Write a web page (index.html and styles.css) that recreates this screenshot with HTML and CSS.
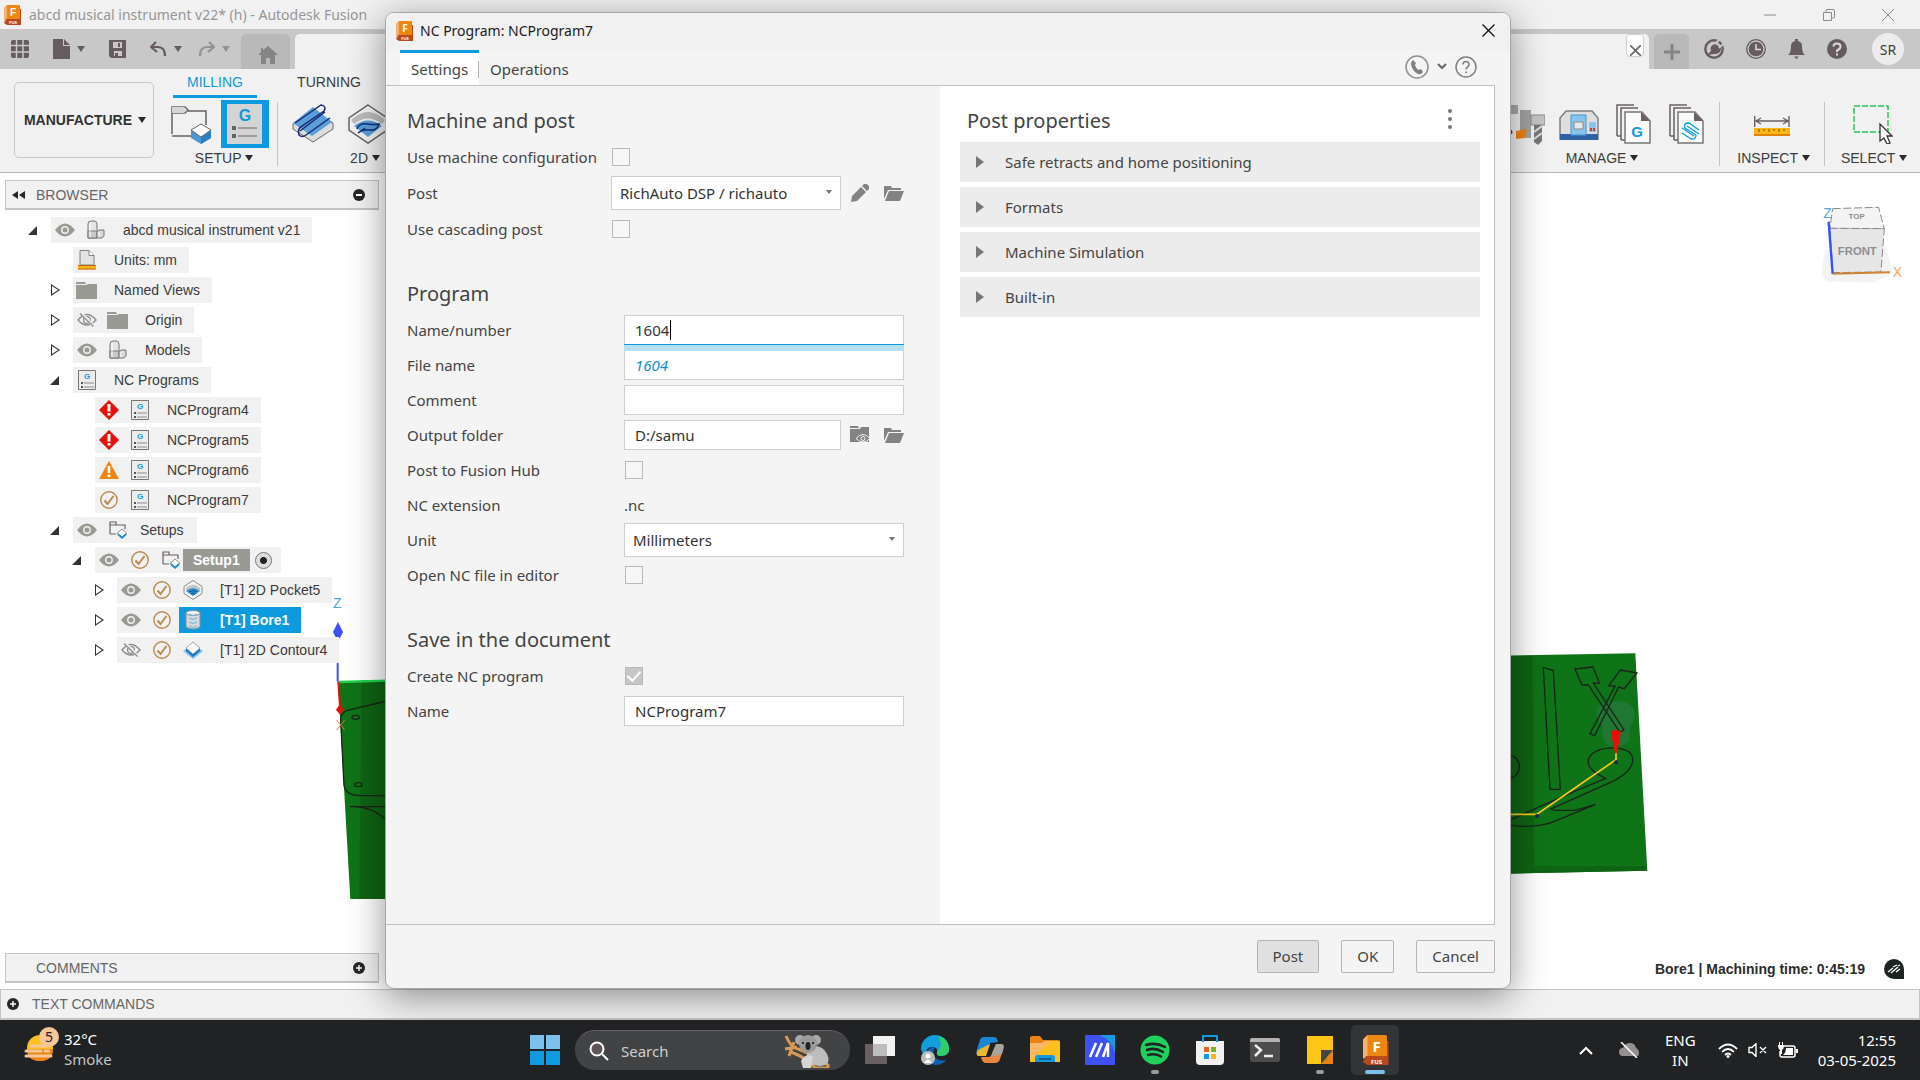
FILE: index.html
```html
<!DOCTYPE html>
<html lang="en">
<head>
    <meta charset="UTF-8">
    <meta name="viewport" content="width=device-width, initial-scale=1.0">
    <title>abcd musical instrument v22* (h) - Autodesk Fusion</title>
    <link rel="stylesheet" href="styles.css">
</head>
<body>

    <!-- shared icons -->
    <svg class="defs" width="0" height="0">
        <symbol id="fusion" viewBox="0 0 18 20">
            <path d="M4 0h12a1 1 0 0 1 1 1v13H1V3z" fill="#ec8712"/>
            <path d="M1 3l3-3v14l-3 2z" fill="#f4b271"/>
            <path d="M3 14h15v6H4l-3-2 2-4z" fill="#b9481f"/>
            <path d="M17 4h1v10h-1z" fill="#b9481f"/>
            <text x="10" y="11" font-size="10" font-weight="bold" fill="#fff" text-anchor="middle">F</text>
            <text x="10" y="19" font-size="4" font-weight="bold" fill="#fff" text-anchor="middle">FUS</text>
        </symbol>
        <symbol id="eye" viewBox="0 0 20 14">
            <path d="M0 7Q10-6 20 7Q10 20 0 7z" fill="#9a9a94"/>
            <circle cx="10" cy="7" r="3.2" fill="none" stroke="#f1f1f1" stroke-width="1.4"/>
        </symbol>
        <symbol id="eye-off" viewBox="0 0 20 14">
            <path d="M1 7Q10-4 19 7Q10 17 1 7z" fill="none" stroke="#8c8c88" stroke-width="1.3"/>
            <circle cx="10" cy="7" r="3.4" fill="none" stroke="#8c8c88" stroke-width="1.3"/>
            <path d="M4 0l13 13.5" stroke="#f1f1f1" stroke-width="3"/>
            <path d="M3 .5l13.5 13" stroke="#8c8c88" stroke-width="1.3"/>
        </symbol>
        <symbol id="part" viewBox="0 0 18 20">
            <path d="M1 4q0-3 3-3h3q3 0 3 3v14H1z" fill="#e4e4e4" stroke="#77777a"/>
            <path d="M1 11h9v7H1z" fill="#c9c9c9" stroke="#77777a"/>
            <path d="M10 12l2-2h5v6l-2 2h-5z" fill="#d7d7d7" stroke="#77777a"/>
            <path d="M3 3v14M12 12v5" stroke="#fff"/>
        </symbol>
        <symbol id="folder" viewBox="0 0 21 17">
            <path d="M0 0h9l1 2H0zM0 3h10l2-1h9v15H0z" fill="#9a9a94"/>
        </symbol>
        <symbol id="nc" viewBox="0 0 18 20">
            <path d="M.5.5h17v19H.5z" fill="#ececec" stroke="#77777a"/>
            <text x="9" y="9" font-size="8" font-weight="bold" fill="#0e9ade" text-anchor="middle">G</text>
            <path d="M6 13h10M6 17h10" stroke="#8a8a8a"/>
            <path d="M3 12h2v2H3zM3 16h2v2H3z" fill="#555"/>
        </symbol>
        <symbol id="units" viewBox="0 0 18 20">
            <path d="M2 .5h9l5 5V15H2z" fill="#e3e3e3" stroke="#808080"/>
            <path d="M11 .5v5h5" fill="#fff" stroke="#808080"/>
            <path d="M0 15h18v4.500H0z" fill="#fdb713"/>
            <path d="M0 15.500h18M0 19h18" stroke="#c8601a"/>
        </symbol>
        <symbol id="error" viewBox="0 0 20 20">
            <path d="M10 0l10 10-10 10L0 10z" fill="#e60f0a"/>
            <path d="M8.500 4h3v7.500h-3zM8.500 13h3v2.500h-3z" fill="#fff"/>
        </symbol>
        <symbol id="warn" viewBox="0 0 20 18">
            <path d="M10 0l10 18H0z" fill="#f0860f"/>
            <path d="M8.700 5h2.600v7H8.700zM8.700 13.500h2.600V16H8.700z" fill="#fff"/>
        </symbol>
        <symbol id="ok" viewBox="0 0 18 18">
            <circle cx="9" cy="9" r="8.200" fill="none" stroke="#b98a52" stroke-width="1.400"/>
            <path d="M4.500 9.500l3 3.500 6-8" fill="none" stroke="#b98a52" stroke-width="2"/>
        </symbol>
        <symbol id="setup" viewBox="0 0 18 18">
            <path d="M1 13V1h6v3h9v4M1 4h6M1 13h6" fill="none" stroke="#6a6063" stroke-width="1.200"/>
            <path d="M13 8l4.500 4-4.500 4-4.500-4z" fill="#fff" stroke="#6a6063" stroke-width=".7"/>
            <path d="M8.500 12l4.500 3.500 4.500-3.500v2L13 18l-4.500-4z" fill="#1b8fd6"/>
        </symbol>
        <symbol id="pocket" viewBox="0 0 40 40">
            <path d="M20 1l19 13v12L20 39 1 26V14z" fill="#f3f3f3" stroke="#666" stroke-width="1.500"/>
            <path d="M3 16q17-16 34 0l-3 4q-14-11-28 0z" fill="#bcbcbc"/>
            <path d="M6 22q14-11 28 0L20 33z" fill="#5a9fd8"/>
            <path d="M9 25q2-6 10-5t12 0q-2 7-9 6t-12 3l7-5" fill="none" stroke="#12337a" stroke-width="1.500"/>
        </symbol>
        <symbol id="pocket-small" viewBox="0 0 20 20">
            <path d="M10 .5l9 6v7l-9 6-9-6v-7z" fill="#f3f3f3" stroke="#8a8a8a"/>
            <path d="M3 8q7-7 14 0v3q-7-6-14 0z" fill="#c4c4c4"/>
            <path d="M3 11q7-6 14 0l-7 5z" fill="#2f8dd0"/>
            <path d="M6 12q4-3 8 0M8 14q2-2 4 0" fill="none" stroke="#12507f"/>
        </symbol>
        <symbol id="bore" viewBox="0 0 16 20">
            <path d="M1 3v14q7 4 14 0V3z" fill="#d5d9dc" stroke="#8a8f93"/>
            <ellipse cx="8" cy="3" rx="7" ry="2.500" fill="#eef3f6" stroke="#8a8f93"/>
            <path d="M4 4q4 3 8 0M4 8q4 3 8 0M4 12q4 3 8 0M4 16q4 3 8 0" fill="none" stroke="#6fb5e2"/>
        </symbol>
        <symbol id="contour" viewBox="0 0 20 18">
            <path d="M0 10l10 8 10-8-3-2H3z" fill="#7cc0ee"/>
            <path d="M3 7l7 6 7-6v3l-7 6-7-6z" fill="#1976bd"/>
            <path d="M10 1l7 6-7 6-7-6z" fill="#fafafa" stroke="#999" stroke-width=".8"/>
        </symbol>
        <symbol id="plus-dot" viewBox="0 0 12 12">
            <circle cx="6" cy="6" r="6" fill="#262626"/>
            <path d="M3 6h6M6 3v6" stroke="#fff" stroke-width="1.400"/>
        </symbol>
        <symbol id="open-folder" viewBox="0 0 20 16">
            <path d="M0 1h7l1 2h9v2H4L0 14z" fill="#838383"/>
            <path d="M5 6h15l-4 10H1z" fill="#838383"/>
        </symbol>
        <symbol id="pages" viewBox="0 0 36 40">
            <path d="M1 32V1h17M5 36V4h17M1 32h4M5 36h4" fill="none" stroke="#6a6063" stroke-width="1.500"/>
            <path d="M9 8h17l8 9v22H9z" fill="#fafafa" stroke="#777" stroke-width="1.500"/>
            <path d="M18 1l16 16h-9V8z" fill="#6a6063"/>
        </symbol>
    </svg>

    <header class="title-bar">
        <svg class="app-icon"><use href="#fusion"/></svg>
        <span class="app-title">abcd musical instrument v22* (h) - Autodesk Fusion</span>
        <div class="window-buttons">
            <button aria-label="Minimize"><svg width="12" height="12" viewBox="0 0 12 12"><path d="M0 6h12"/></svg></button>
            <button aria-label="Restore"><svg width="12" height="12" viewBox="0 0 12 12"><path d="M.5 3.500h8v8h-8zM3 3V1.500q0-1 1-1h6q1.500 0 1.500 1.500v6q0 1-1 1H9"/></svg></button>
            <button aria-label="Close"><svg width="12" height="12" viewBox="0 0 12 12"><path d="M0 0l12 12M12 0L0 12"/></svg></button>
        </div>
    </header>

    <nav class="tab-bar">
        <div class="quick">
            <button aria-label="Data panel"><svg width="18" height="18" viewBox="0 0 18 18"><rect width="18" height="18" rx="2" fill="#665c60"/><path d="M5.500 0v18M12 0v18M0 5.500h18M0 12h18" stroke="#c8c8c8" stroke-width="1.500"/></svg></button>
            <button class="drop" aria-label="File"><svg width="17" height="20" viewBox="0 0 17 20"><path d="M0 0h10v7h7v13H0zM11 0l6 6h-6z" fill="#665c60"/></svg></button>
            <button aria-label="Save"><svg width="17" height="18" viewBox="0 0 17 18"><path d="M0 0h17v18H2l-2-2z" fill="#665c60"/><path d="M4 2h9v6H4zM5 11h8v5H5z" fill="#c8c8c8"/><path d="M9 3h2v4H9zM6 13h3v4H6z" fill="#665c60"/></svg></button>
            <button class="drop" aria-label="Undo"><svg width="17" height="16" viewBox="0 0 17 16"><path d="M6 1L1 6l6 5M1 6h7q7 0 7 9" fill="none" stroke="#665c60" stroke-width="2.200"/></svg></button>
            <button class="drop faded" aria-label="Redo"><svg width="17" height="16" viewBox="0 0 17 16"><path d="M11 1l5 5-6 5M16 6H9q-7 0-7 9" fill="none" stroke="#665c60" stroke-width="2.200"/></svg></button>
        </div>
        <button class="home-tab" aria-label="Home"><svg width="20" height="18" viewBox="0 0 20 18"><path d="M10 0l10 9h-3v9h-5v-6H8v6H3V9H0L3 6V2h2v2z" fill="#858585"/></svg></button>
        <div class="doc-tab">
            <button aria-label="Close tab"><svg width="11" height="11" viewBox="0 0 11 11"><path d="M0 0l11 11M11 0L0 11" stroke="#666" stroke-width="1.600"/></svg></button>
        </div>
        <button class="new-tab" aria-label="New tab"><svg width="16" height="16" viewBox="0 0 16 16"><path d="M8 0v16M0 8h16" stroke="#858585" stroke-width="3"/></svg></button>
        <div class="account">
            <button aria-label="Extensions"><svg width="20" height="20" viewBox="0 0 20 20"><circle cx="10" cy="10" r="8.700" fill="none" stroke="#665c60" stroke-width="2.400"/><path d="M3 16l4-4q-2-6 5-7l3 3 2 1q0 6-7 6z" fill="#665c60"/><path d="M11 5l4-4M15 9l4-4" stroke="#c8c8c8" stroke-width="2"/></svg></button>
            <button aria-label="Job status"><svg width="20" height="20" viewBox="0 0 20 20"><circle cx="10" cy="10" r="9.300" fill="none" stroke="#665c60" stroke-width="1.300"/><circle cx="10" cy="10" r="7.300" fill="#665c60"/><path d="M10 5v5.500h5" fill="none" stroke="#ddd" stroke-width="1.500"/></svg></button>
            <button aria-label="Notifications"><svg width="17" height="20" viewBox="0 0 17 20"><path d="M0 16q3-2 3-9 0-4 4-5V0h3v2q4 1 4 5 0 7 3 9zM6 17.500h5L8.500 20z" fill="#665c60"/></svg></button>
            <button aria-label="Help"><svg width="20" height="20" viewBox="0 0 20 20"><circle cx="10" cy="10" r="10" fill="#665c60"/><path d="M6.500 7.500q0-3 3.500-3t3.500 3q0 2-2 3t-1.500 2.500" fill="none" stroke="#ddd" stroke-width="2"/><path d="M9 14.500h2v2H9z" fill="#ddd"/></svg></button>
            <button class="avatar">SR</button>
        </div>
    </nav>

    <section class="ribbon">
        <button class="workspace">MANUFACTURE <i class="tri"></i></button>
        <div class="ribbon-main">
            <div class="ribbon-tabs">
                <button class="active">MILLING</button>
                <button>TURNING</button>
            </div>
            <div class="groups">
                <div class="group">
                    <div class="tools setup-tools">
                        <svg width="40" height="40" viewBox="0 0 40 40"><path d="M1 30V3h13l3 3-3 3H1M17 7h18v14M1 32h20" fill="none" stroke="#6a6063" stroke-width="1.500"/><path d="M1 3h12l3 3-3 3H1z" fill="#d5d5d5"/><path d="M30 20l10 6v8l-10 6-10-6v-8z" fill="#4b98d2"/><path d="M30 20l10 6-10 7-10-7z" fill="#fff" stroke="#666"/><path d="M30 33l10-7v8l-10 6z" fill="#2f7fbe"/></svg>
                        <button class="nc-button" aria-label="NC Program"><svg width="48" height="48" viewBox="0 0 48 48"><path d="M6 4h35v40H6z" fill="#d4d4d4"/><text x="24" y="21" font-size="16" font-weight="bold" fill="#0e9ade" text-anchor="middle">G</text><path d="M11 26h4v4h-4zM11 34h4v4h-4z" fill="#6a6063"/><path d="M17 28h19M17 36h19" stroke="#6a6063"/></svg></button>
                    </div>
                    <span class="caption">SETUP <i class="tri"></i></span>
                </div>
                <div class="group two-d">
                    <div class="tools">
                        <svg width="42" height="40" viewBox="0 0 42 40"><path d="M21 5l20 14v6L21 38 1 25v-5z" fill="#ddd" stroke="#666"/><path d="M21 3l19 15-20 14L1 19z" fill="#5a9fd8"/><path d="M3 19L29 1q6 1 3 6L10 22q-5 3-3 9 3 3 7 0l24-17M8 27L33 8" fill="none" stroke="#182a78" stroke-width="1.500"/></svg>
                        <svg width="40" height="40"><use href="#pocket"/></svg>
                    </div>
                    <span class="caption">2D <i class="tri"></i></span>
                </div>
                <div class="group manage">
                    <div class="tools">
                        <svg width="38" height="42" viewBox="0 0 38 42"><path d="M0 2h11v9H0z" fill="#aaa"/><path d="M3 11v16" stroke="#555"/><circle cx="3" cy="29" r="2.500" fill="#e0180c"/><path d="M13 7h11v28H13z" fill="#a3a3a3"/><path d="M9 28l11-2-2 9-9 1z" fill="#f08412"/><path d="M24 12h14v10H24z" fill="#c4c4c4" stroke="#888"/><path d="M27 22h8v16l-4 4-4-3z" fill="#777"/><path d="M27 29l8-6M27 36l8-6" stroke="#ddd" stroke-width="2"/></svg>
                        <svg width="40" height="40" viewBox="0 0 40 40"><path d="M1 35V14l6-7h26l6 7v21z" fill="#dedede" stroke="#7f7f7c" stroke-width="1.500"/><path d="M1 30h38v6H1z" fill="#2e62a5"/><path d="M12 11h15v20H12z" fill="#87c5f0" stroke="#4795cf"/><path d="M15 18h9v7h-9z" fill="#e4e8ea" stroke="#888"/><path d="M30 18h7v10h-7z" fill="#87c5f0"/><path d="M31 24h2v3h-2zM34 24h2v3h-2z" fill="#c2402c"/></svg>
                        <svg class="wide" width="36" height="40" viewBox="0 0 36 40"><use href="#pages"/><text x="21" y="33" font-size="15" font-weight="bold" fill="#0e9ade" text-anchor="middle">G</text></svg>
                        <svg class="wide" width="36" height="40" viewBox="0 0 36 40"><use href="#pages"/><path d="M13 29l9 6q5 1 5-4l-11-7q-2-5 4-5l10 7M13 24l12 8M18 22l12 8" fill="none" stroke="#0e9ade" stroke-width="1.300"/></svg>
                    </div>
                    <span class="caption">MANAGE <i class="tri"></i></span>
                </div>
                <div class="group inspect">
                    <div class="tools">
                        <svg width="36" height="40" viewBox="0 0 36 40"><path d="M.7 12v11M35 12v11M2 17h31M7 14l-5 3 5 3M29 14l5 3-5 3" fill="none" stroke="#6a6063" stroke-width="1.400"/><path d="M0 24h36v8H0z" fill="#fdb713"/><path d="M0 30h36v2H0z" fill="#e6820c"/><path d="M5 25v3M10 25v2M15 25v3M20 25v2M25 25v3M30 25v2" stroke="#7a4500"/></svg>
                    </div>
                    <span class="caption">INSPECT <i class="tri"></i></span>
                </div>
                <div class="group select">
                    <div class="tools">
                        <svg width="40" height="40" viewBox="0 0 40 40"><path d="M1 2h34v26H1z" fill="none" stroke="#25c957" stroke-width="1.500" stroke-dasharray="6 2"/><path d="M27 20v17l4-3 3 6 3-1-3-7h5z" fill="#fff" stroke="#333" stroke-width="1.300"/></svg>
                    </div>
                    <span class="caption">SELECT <i class="tri"></i></span>
                </div>
            </div>
        </div>
    </section>

    <main class="canvas">
        <!-- viewport scene: stock, axes and view cube -->
        <svg class="scene" viewBox="0 173 1920 816" preserveAspectRatio="none">
            <g transform="translate(320 640) scale(.3333)">
                <path d="M54 125l150-6v658H91z" fill="#0f7318"/>
                <path d="M125 121h80v656h-87z" fill="#0f6414"/>
                <path d="M56 126l150-4" stroke="#1ed24c" stroke-width="7"/>
                <path d="M53 68v57" stroke="#3d51f5" stroke-width="6"/>
                <path d="M200 183L80 212q-18 8-18 25l10 200q6 30 50 30h80M90 500h110M90 500q60-4 110 40" fill="none" stroke="#1b231b" stroke-width="4"/>
                <ellipse cx="107" cy="232" rx="11" ry="6" fill="none" stroke="#1b231b" stroke-width="4"/>
                <ellipse cx="115" cy="434" rx="11" ry="6" fill="none" stroke="#1b231b" stroke-width="4"/>
                <path d="M55 125l5 75" stroke="#e60f0a" stroke-width="6"/>
                <path d="M58 194l13 14-10 16-13-14z" fill="#e60f0a"/>
                <path d="M50 240l24 30M74 240l-24 30" stroke="#d5783c" stroke-width="3"/>
            </g>
            <path d="M338 622l5 10-3 6h-4l-3-6z" fill="#3d51f5"/>
            <text x="333" y="608" font-size="14" fill="#4ba6dc">Z</text>
            <g transform="translate(1490 640) scale(.3333)">
                <path d="M50 47l386-7 36 652-422 9z" fill="#0f7318"/>
                <path d="M50 47h78l4 632h337l3 13-422 9z" fill="#0f6414"/>
                <path d="M320 220q0-36 60-36t52 50q-2 16-12 24v45q-20 20-60 14-26-8-24-60-16-14-16-37z" fill="#1f7733"/>
                <path d="M160 83l30 8 21 357h-31zM255 87l54-6 19 49-18-1 92 141-13 6L295 135h-19zM391 90l50 9-38 47-17-5-72 146-14-6 75-143-19-1zM40 340q48 4 48 42-4 34-48 38M50 545q150-70 297-130l-28-15q-30-20-23-46 20-32 84-30 52 6 48 40-6 34-60 60L183 507l12 4h60l62-18-120 50q-60 26-150 10" fill="none" stroke="#1b231b" stroke-width="4"/>
                <path d="M50 523h90l238-164v-20" fill="none" stroke="#fcc81c" stroke-width="5"/>
                <path d="M362 275q15-12 31 0l-12 65h-6z" fill="#e60f0a"/>
                <circle cx="378" cy="367" r="6" fill="#1a245c"/>
                <circle cx="141" cy="528" r="6" fill="#1a245c"/>
            </g>
            <g transform="translate(1480 0) scale(.3333)">
                <path d="M1035 750l185-10 18 80-60 28-140-4-14-20z" fill="#f3f3f3"/>
                <path d="M1058 626l138-4 17 64-163-1z" fill="#f4f4f4" stroke="#888" stroke-width="3" stroke-dasharray="24 8"/>
                <path d="M1050 685l163 1-10 130-144 2z" fill="#e6e6e6" stroke="#888" stroke-width="3" stroke-dasharray="24 8"/>
                <path d="M1046 665l12 157" stroke="#3350fa" stroke-width="7"/>
                <path d="M1058 821l172-4" stroke="#cf8434" stroke-width="6"/>
                <text x="1130" y="657" font-size="24" font-weight="bold" fill="#8e8e8e" text-anchor="middle">TOP</text>
                <text x="1132" y="765" font-size="34" font-weight="bold" fill="#8e8e8e" text-anchor="middle">FRONT</text>
                <text x="1030" y="654" font-size="42" fill="#58a8da">Z</text>
                <text x="1238" y="830" font-size="42" fill="#f0a45c">X</text>
            </g>
        </svg>

        <aside class="side">
            <div class="panel-head">
                <svg width="13" height="8" viewBox="0 0 13 8"><path d="M6 0v8L0 4zM13 0v8L7 4z" fill="#262626"/></svg>
                <span>BROWSER</span>
                <svg class="end" width="12" height="12" viewBox="0 0 12 12"><circle cx="6" cy="6" r="6" fill="#262626"/><path d="M3 6h6" stroke="#fff" stroke-width="2"/></svg>
            </div>
            <ul class="tree">
                <li class="open"><div class="row"><b><svg width="20" height="14"><use href="#eye"/></svg></b><b><svg width="18" height="20"><use href="#part"/></svg></b><span>abcd musical instrument v21</span></div>
                    <ul>
                        <li><div class="row"><b><svg width="18" height="20"><use href="#units"/></svg></b><span>Units: mm</span></div></li>
                        <li class="closed"><div class="row"><b><svg width="21" height="17"><use href="#folder"/></svg></b><span>Named Views</span></div></li>
                        <li class="closed"><div class="row"><b><svg width="20" height="14"><use href="#eye-off"/></svg></b><b><svg width="21" height="17"><use href="#folder"/></svg></b><span>Origin</span></div></li>
                        <li class="closed"><div class="row"><b><svg width="20" height="14"><use href="#eye"/></svg></b><b><svg width="18" height="20"><use href="#part"/></svg></b><span>Models</span></div></li>
                        <li class="open"><div class="row"><b><svg width="18" height="20"><use href="#nc"/></svg></b><span>NC Programs</span></div>
                            <ul>
                                <li><div class="row"><b><svg width="20" height="20"><use href="#error"/></svg></b><b><svg width="18" height="20"><use href="#nc"/></svg></b><span>NCProgram4</span></div></li>
                                <li><div class="row"><b><svg width="20" height="20"><use href="#error"/></svg></b><b><svg width="18" height="20"><use href="#nc"/></svg></b><span>NCProgram5</span></div></li>
                                <li><div class="row"><b><svg width="20" height="18"><use href="#warn"/></svg></b><b><svg width="18" height="20"><use href="#nc"/></svg></b><span>NCProgram6</span></div></li>
                                <li><div class="row"><b><svg width="18" height="18"><use href="#ok"/></svg></b><b><svg width="18" height="20"><use href="#nc"/></svg></b><span>NCProgram7</span></div></li>
                            </ul>
                        </li>
                        <li class="open"><div class="row setups"><b><svg width="20" height="14"><use href="#eye"/></svg></b><b><svg width="18" height="18"><use href="#setup"/></svg></b><span>Setups</span></div>
                            <ul>
                                <li class="open"><div class="row active-setup"><b><svg width="20" height="14"><use href="#eye"/></svg></b><b><svg width="18" height="18"><use href="#ok"/></svg></b><b><svg width="18" height="18"><use href="#setup"/></svg></b><span>Setup1</span><input type="radio" name="setup" aria-label="Activate Setup1" checked></div>
                                    <ul>
                                        <li class="closed"><div class="row"><b><svg width="20" height="14"><use href="#eye"/></svg></b><b><svg width="18" height="18"><use href="#ok"/></svg></b><b><svg width="20" height="20"><use href="#pocket-small"/></svg></b><span>[T1] 2D Pocket5</span></div></li>
                                        <li class="closed"><div class="row selected"><b><svg width="20" height="14"><use href="#eye"/></svg></b><b><svg width="18" height="18"><use href="#ok"/></svg></b><b><svg width="16" height="20"><use href="#bore"/></svg></b><span>[T1] Bore1</span></div></li>
                                        <li class="closed"><div class="row"><b><svg width="20" height="14"><use href="#eye-off"/></svg></b><b><svg width="18" height="18"><use href="#ok"/></svg></b><b><svg width="20" height="18"><use href="#contour"/></svg></b><span>[T1] 2D Contour4</span></div></li>
                                    </ul>
                                </li>
                            </ul>
                        </li>
                    </ul>
                </li>
            </ul>
            <div class="panel-head comments">
                <span>COMMENTS</span>
                <svg class="end" width="12" height="12"><use href="#plus-dot"/></svg>
            </div>
        </aside>
        <div class="status">
            <span>Bore1 | Machining time: 0:45:19</span>
            <svg width="20" height="20" viewBox="0 0 20 20"><path d="M10 0a10 10 0 0 1 10 10v10H10A10 10 0 0 1 10 0z" fill="#1d2524"/><path d="M4 13l5-4M7 14l7-6M12 13l4-3M9 8l4-2M14 7l2-1" stroke="#fff" stroke-width="1.300"/></svg>
        </div>
    </main>

    <div class="text-commands">
        <svg width="12" height="12"><use href="#plus-dot"/></svg>
        <span>TEXT COMMANDS</span>
    </div>

    <footer class="taskbar">
        <div class="weather">
            <svg width="36" height="36" viewBox="0 0 36 36"><circle cx="16" cy="21" r="13" fill="#fdc01c"/><path d="M3 22h26q0 12-13 12T3 22z" fill="#ec8414"/><path d="M2 24h15M2 29h25M7 19h18M21 24h4" stroke="#f6c896" stroke-width="3" stroke-linecap="round"/><circle cx="25" cy="10" r="10" fill="#f5c697"/><text x="25" y="15" font-size="14" fill="#222" text-anchor="middle">5</text></svg>
            <div>32°C<br><span>Smoke</span></div>
        </div>
        <div class="apps">
            <button class="start" aria-label="Start"><svg width="30" height="30" viewBox="0 0 30 30"><path d="M0 0h14v14H0zM16 0h14v14H16z" fill="#7cc0ee"/><path d="M0 16h14v14H0zM16 16h14v14H16z" fill="#109be0"/></svg></button>
            <label class="search">
                <svg width="20" height="20" viewBox="0 0 20 20"><circle cx="8" cy="8" r="6.500" fill="#5f5559" stroke="#fff" stroke-width="2"/><path d="M13 13l6 6" stroke="#fff" stroke-width="2"/></svg>
                <input type="text" placeholder="Search" aria-label="Search">
                <svg width="48" height="34" viewBox="0 0 48 34"><path d="M3 2q5 12 12 13 12 4 30 16v3H32Q24 24 8 18M11 8l-5 14M14 13L2 15" stroke="#d79a55" stroke-width="3" fill="none"/><path d="M24 12q16-2 20 8 4 8-2 11-10 3-18-4z" fill="#bdbdbd"/><path d="M18 27q4-8 12-5l-2 12h-8z" fill="#d5d5d5"/><circle cx="17" cy="6" r="5" fill="#a9a9a9"/><circle cx="33" cy="6" r="5" fill="#a9a9a9"/><circle cx="25" cy="10" r="9" fill="#9a9a9a"/><ellipse cx="25" cy="12" rx="2.500" ry="4" fill="#222"/><circle cx="20" cy="9" r="1" fill="#111"/><circle cx="30" cy="9" r="1" fill="#111"/></svg>
            </label>
            <button aria-label="Task view"><svg width="30" height="28" viewBox="0 0 30 28"><path d="M0 8h22v20H0z" fill="#6a6063"/><path d="M8 0h22v20H8z" fill="#f1f1f1"/><path d="M8 8h14v12H8z" fill="#bdbdbd"/></svg></button>
            <button aria-label="Edge"><svg width="30" height="30" viewBox="0 0 30 30"><path d="M1 14a14 14 0 0 1 28 0q0 7-8 7-5 0-4-4 1-5-5-5-7 0-6 9-4-2-5-7z" fill="#129ddb"/><path d="M18 1q11 2 11 13 0 7-8 7-5 0-4-4 7-7 1-16z" fill="#2fce6a"/><path d="M6 20q2-9 9-8-4 8 2 12 5 3 10 0-4 6-12 6-8-1-9-10z" fill="#1260b0"/><circle cx="8" cy="23" r="7" fill="#bcbcbc"/><circle cx="8" cy="21" r="2.500" fill="#fff"/><path d="M4 28q4-7 8 0z" fill="#fff"/></svg></button>
            <button aria-label="Copilot"><svg width="30" height="28" viewBox="0 0 30 28"><path d="M9 1h10q3 0 4 5l-8 1-4 12H4q-4 0-2-6L5 4q1-3 4-3z" fill="#1b86d6"/><path d="M3 14l12-6-4 12H4q-4 0-1-6z" fill="#f0b62e"/><path d="M21 8h5q4 0 2 6l-3 9q-1 4-5 4H10q-3-1-4-6h8q2 0 3-4z" fill="#e98540"/><path d="M21 8h5q4 0 2 6l-1 4-11 3z" fill="#a5a59d"/></svg></button>
            <button aria-label="File Explorer"><svg width="30" height="28" viewBox="0 0 30 28"><path d="M0 2q0-2 2-2h8l3 4h15q2 0 2 2v8H0z" fill="#e98414"/><path d="M0 7h12l3-2h15v21H0z" fill="#fdc01c"/><path d="M0 7h12l3-2h6L0 24z" fill="#f8b86a"/><path d="M5 26v-4q0-3 3-3h14q3 0 3 3v4z" fill="#129bdc"/><path d="M9 23h12" stroke="#155e97" stroke-width="2"/></svg></button>
            <button aria-label="MA"><svg width="30" height="30" viewBox="0 0 30 30"><path d="M0 0h30v30H0z" fill="#3e51f0"/><path d="M14 0h16v18q-4-14-16-18z" fill="#1a9ade"/><path d="M5 22l6-14M11 22l6-14M18 22l5-14v14" fill="none" stroke="#fff" stroke-width="2.500"/></svg></button>
            <button class="running" aria-label="Spotify"><svg width="30" height="30" viewBox="0 0 30 30"><circle cx="15" cy="15" r="14.500" fill="#1fd15c"/><path d="M6 10q10-3 19 2M7 15q8-3 16 2M8 20q7-2 13 1.500" fill="none" stroke="#202224" stroke-width="2.500" stroke-linecap="round"/></svg></button>
            <button aria-label="Store"><svg width="30" height="30" viewBox="0 0 30 30"><path d="M1 6h28v20q0 4-4 4H5q-4 0-4-4z" fill="#f1f1f1"/><path d="M8 7V1h14v6" fill="none" stroke="#129bdc" stroke-width="2"/><path d="M9 12h5v5H9z" fill="#e0641e"/><path d="M16 12h5v5h-5z" fill="#7cb518"/><path d="M9 19h5v5H9z" fill="#129bdc"/><path d="M16 19h5v5h-5z" fill="#fdb713"/></svg></button>
            <button aria-label="Terminal"><svg width="30" height="24" viewBox="0 0 30 24"><rect width="30" height="24" rx="2" fill="#4c4c4c"/><path d="M0 4V2q0-2 2-2h26q2 0 2 2v2z" fill="#b6b2b3"/><path d="M5 7l6 5-6 6M14 18h9" fill="none" stroke="#eee" stroke-width="2.500"/></svg></button>
            <button class="running" aria-label="Sticky Notes"><svg width="26" height="28" viewBox="0 0 26 28"><path d="M0 0h26v15L14 28H0z" fill="#fdc516"/><path d="M14 14h12L14 28z" fill="#444"/><path d="M26 15v13H14z" fill="#e98414"/></svg></button>
            <button class="running current" aria-label="Fusion"><svg width="28" height="30"><use href="#fusion"/></svg></button>
        </div>
        <div class="tray">
            <svg width="14" height="9" viewBox="0 0 14 9"><path d="M1 8l6-6 6 6" fill="none" stroke="#fff" stroke-width="2"/></svg>
            <svg width="20" height="16" viewBox="0 0 20 16"><path d="M4 14q-4 0-4-4t4-4q2-5 7-5t6 5q3 1 3 5t-4 3z" fill="#93908f"/><path d="M2 0l16 16" stroke="#fff" stroke-width="1.500"/></svg>
            <div class="lang">ENG<br>IN</div>
            <div class="net">
                <svg width="20" height="15" viewBox="0 0 20 15"><path d="M1 6q9-9 18 0M4 9q6-6 12 0M7 12q3-3 6 0" fill="none" stroke="#fff" stroke-width="1.800"/><circle cx="10" cy="13.500" r="1.500" fill="#fff"/></svg>
                <svg width="20" height="14" viewBox="0 0 20 14"><path d="M1 4.500h3l4-4v13l-4-4H1zM12 4l6 6M18 4l-6 6" fill="none" stroke="#fff" stroke-width="1.400"/></svg>
                <svg width="20" height="17" viewBox="0 0 20 17"><path d="M6 4h9q2 0 2 2v7q0 2-2 2H4q-2 0-2-2V9" fill="none" stroke="#fff" stroke-width="1.500"/><path d="M8 6h7v7H5q3-2 3-7zM18 7h2v4h-2zM1 0h1v3h2V0h1v3h1q0 4-2 5v4H2V8Q0 7 0 3h1z" fill="#fff"/></svg>
            </div>
            <div class="clock">12:55<br>03-05-2025</div>
        </div>
    </footer>

    <div class="dialog" role="dialog" aria-labelledby="dialogTitle">
        <div class="dialog-title">
            <svg width="18" height="20"><use href="#fusion"/></svg>
            <span id="dialogTitle">NC Program: NCProgram7</span>
            <button aria-label="Close dialog"><svg width="13" height="13" viewBox="0 0 13 13"><path d="M.5.5l12 12M12.500.5l-12 12" stroke="#111" stroke-width="1.300"/></svg></button>
        </div>
        <div class="dialog-tabs">
            <button class="current">Settings</button>
            <button>Operations</button>
            <div class="help">
                <svg width="24" height="24" viewBox="0 0 24 24"><circle cx="12" cy="12" r="11" fill="none" stroke="#8f8f8f" stroke-width="1.500"/><path d="M8 5l3 3-1 2q1 4 4 5l2-1 2 3q-2 3-5 2-6-3-7-10 0-3 2-4z" fill="#808080"/></svg>
                <svg width="10" height="7" viewBox="0 0 10 7"><path d="M1 1l4 4 4-4" fill="none" stroke="#666" stroke-width="2"/></svg>
                <svg width="22" height="22" viewBox="0 0 22 22"><circle cx="11" cy="11" r="10" fill="none" stroke="#808080" stroke-width="1.500"/><path d="M8 8.500q0-3 3-3t3 3q0 1.500-1.500 2.500T11 13.500M11 15.500v1.800" fill="none" stroke="#808080" stroke-width="1.600"/></svg>
            </div>
        </div>
        <div class="dialog-body">
            <form class="settings">
                <h2>Machine and post</h2>
                <div class="fields machine">
                    <div class="field"><label for="useMachine">Use machine configuration</label><input type="checkbox" id="useMachine"></div>
                    <div class="field"><label for="post">Post</label>
                        <div class="with-icons">
                            <div class="select-box"><select id="post"><option>RichAuto DSP / richauto</option></select></div>
                            <button type="button" aria-label="Edit post"><svg width="18" height="18" viewBox="0 0 18 18"><path d="M0 18l1-6 9-9 5 5-9 9zM11 2l2-2q2-1 4 1t1 4l-2 2z" fill="#838383"/></svg></button>
                            <button type="button" aria-label="Browse posts"><svg width="20" height="16"><use href="#open-folder"/></svg></button>
                        </div>
                    </div>
                    <div class="field"><label for="cascading">Use cascading post</label><input type="checkbox" id="cascading"></div>
                </div>

                <h2>Program</h2>
                <div class="fields">
                    <div class="field"><label for="number">Name/number</label>
                        <div class="focused"><input type="text" id="number" value="1604"><i class="caret"></i></div>
                    </div>
                    <div class="field"><label for="fileName">File name</label><input type="text" id="fileName" class="derived" value="1604"></div>
                    <div class="field"><label for="comment">Comment</label><input type="text" id="comment"></div>
                    <div class="field"><label for="folder">Output folder</label>
                        <div class="with-icons">
                            <input type="text" id="folder" value="D:/samu">
                            <button type="button" aria-label="Show folder"><svg width="20" height="17" viewBox="0 0 20 17"><path d="M0 0h8l1 2H0zM0 3h10l1-2h8v15H0z" fill="#838383"/><path d="M6 12.500q7-8 14 0-7 7-14 0z" fill="#838383" stroke="#f4f4f4"/><circle cx="13" cy="12.500" r="2" fill="none" stroke="#f4f4f4"/></svg></button>
                            <button type="button" aria-label="Browse folder"><svg width="20" height="16"><use href="#open-folder"/></svg></button>
                        </div>
                    </div>
                    <div class="field"><label for="hub">Post to Fusion Hub</label><input type="checkbox" id="hub"></div>
                    <div class="field"><label>NC extension</label><span>.nc</span></div>
                    <div class="field"><label for="unit">Unit</label><div class="select-box"><select id="unit"><option>Millimeters</option></select></div></div>
                    <div class="field"><label for="openFile">Open NC file in editor</label><input type="checkbox" id="openFile"></div>
                </div>

                <h2>Save in the document</h2>
                <div class="fields">
                    <div class="field"><label for="create">Create NC program</label><input type="checkbox" id="create" checked disabled></div>
                    <div class="field"><label for="name">Name</label><input type="text" id="name" value="NCProgram7"></div>
                </div>
            </form>
            <div class="properties">
                <div class="properties-head">
                    <h2>Post properties</h2>
                    <button aria-label="More"><svg width="4" height="20" viewBox="0 0 4 20"><circle cx="2" cy="2" r="2"/><circle cx="2" cy="10" r="2"/><circle cx="2" cy="18" r="2"/></svg></button>
                </div>
                <button class="section">Safe retracts and home positioning</button>
                <button class="section">Formats</button>
                <button class="section">Machine Simulation</button>
                <button class="section">Built-in</button>
            </div>
        </div>
        <div class="dialog-footer">
            <button class="primary">Post</button>
            <button>OK</button>
            <button>Cancel</button>
        </div>
    </div>

</body>
</html>
```

FILE: styles.css
```css
* {
    box-sizing: border-box;
}
body {
    margin: 0;
    height: 100vh;
    display: flex;
    flex-direction: column;
    overflow: hidden;
    font-family: "Liberation Sans", Arial, sans-serif;
    font-size: 14px;
    color: #3c3c3c;
    background-color: white;
}
button {
    border: 0;
    padding: 0;
    background: none;
    font: inherit;
    color: inherit;
    display: flex;
    align-items: center;
    justify-content: center;
}
svg {
    flex: none;
    display: block;
}
.defs {
    display: none;
}
h2 {
    margin: 0;
    font-size: 20px;
    line-height: 28px;
    font-weight: normal;
}

/* Title bar */
.title-bar {
    height: 29px;
    flex: none;
    display: flex;
    align-items: center;
    padding: 0 3px;
    background-color: #f1f1f1;
}
.app-icon {
    width: 18px;
    height: 20px;
}
.app-title {
    margin-left: 8px;
    font: 14px "Noto Sans", sans-serif;
    color: #969696;
}
.window-buttons {
    display: flex;
    margin-left: auto;
}
.window-buttons button {
    width: 59px;
    height: 29px;
}
.window-buttons path {
    fill: none;
    stroke: #8a8a8a;
}

/* Document tabs */
.tab-bar {
    height: 40px;
    flex: none;
    display: flex;
    align-items: flex-end;
    background-color: #c8c8c8;
}
.quick {
    width: 241px;
    height: 40px;
    display: flex;
    align-items: center;
    gap: 24px;
    padding-left: 11px;
}
.drop {
    gap: 7px;
}
.drop::after {
    content: "";
    border: 4px solid transparent;
    border-top: 6px solid #665c60;
    border-bottom: 0;
}
.quick .drop + button, .quick button + .drop.faded {
    margin-left: -8px;
}
.quick .drop + button:not(.drop) {
    margin-left: 0;
}
.faded {
    opacity: 0.5;
}
.home-tab, .doc-tab, .new-tab {
    height: 35px;
    border-radius: 5px 5px 0 0;
    background-color: #b9b9b9;
}
.home-tab {
    width: 49px;
    padding: 6px 0 0 4px;
}
.doc-tab {
    flex: 1;
    margin: 0 5px;
    padding-right: 5px;
    background-color: #f1f1f1;
}
.doc-tab button {
    width: 18px;
    height: 23px;
    margin-left: auto;
    padding-top: 10px;
    border: 1px solid #d0d0d0;
    border-radius: 4px;
    background-color: white;
}
.new-tab {
    width: 35px;
}
.account {
    width: 231px;
    height: 40px;
    display: flex;
    align-items: center;
    gap: 22px;
    padding-left: 15px;
}
.avatar {
    width: 32px;
    height: 32px;
    margin-left: 3px;
    border-radius: 50%;
    background-color: #ececec;
    font-family: "Noto Sans", sans-serif;
}

/* Ribbon */
.ribbon {
    height: 104px;
    flex: none;
    display: flex;
    background-color: #f1f1f1;
    border-bottom: 1px solid #b9b9b9;
}
.tri {
    display: inline-block;
    border: 4px solid transparent;
    border-top: 6px solid #2a2a2a;
    border-bottom: 0;
    vertical-align: 2px;
}
.workspace {
    width: 140px;
    height: 76px;
    flex: none;
    margin: 13px 17px 0 14px;
    padding-left: 2px;
    gap: 6px;
    border: 1px solid #c8c8c8;
    border-radius: 5px;
    font-weight: bold;
    color: #333;
}
.ribbon-main {
    flex: 1;
}
.ribbon-tabs {
    display: flex;
    height: 29px;
    padding-left: 2px;
}
.ribbon-tabs button {
    width: 84px;
    margin-right: 30px;
    border-bottom: 3px solid transparent;
}
.ribbon-tabs .active {
    color: #0e9ade;
    border-color: #0e9ade;
}
.groups {
    display: flex;
}
.group {
    display: flex;
    flex-direction: column;
    align-items: center;
    height: 64px;
    margin-top: 4px;
}
.tools {
    height: 44px;
    display: flex;
    align-items: center;
    gap: 14px;
}
.setup-tools {
    gap: 10px;
    padding: 0 8px 0 0;
}
.nc-button {
    background-color: #0e9ade;
}
.caption {
    margin-top: 4px;
    line-height: 16px;
}
.two-d {
    padding-left: 14px;
    border-left: 1px solid #c4c4c4;
}
.two-d .caption {
    padding-left: 50px;
}
.manage {
    margin-left: auto;
    padding-right: 14px;
}
.manage .wide {
    margin-left: 3px;
}
.manage .caption {
    padding-right: 8px;
}
.inspect, .select {
    width: 105px;
    border-left: 1px solid #c4c4c4;
}
.select {
    width: 96px;
}
.inspect .caption, .select .caption {
    padding-left: 3px;
}

/* Canvas */
.canvas {
    position: relative;
    flex: 1;
    display: flex;
    justify-content: space-between;
}
.scene {
    position: absolute;
    width: 100%;
    height: 100%;
}
.side {
    position: relative;
    width: 374px;
    margin: 7px 0 6px 5px;
    display: flex;
    flex-direction: column;
}
.panel-head {
    height: 30px;
    flex: none;
    display: flex;
    align-items: center;
    padding: 0 13px 0 6px;
    background-color: #f1f1f1;
    border: 1px solid #c4c4c4;
    border-bottom-width: 2px;
    color: #666;
}
.panel-head span {
    margin-left: 11px;
}
.panel-head .end {
    margin-left: auto;
}
.comments {
    margin-top: auto;
}
.comments span {
    margin-left: 24px;
}
.tree, .tree ul {
    list-style: none;
    margin: 0;
    padding-left: 22px;
}
.tree {
    margin-top: 7px;
    padding-left: 46px;
}
.tree li {
    position: relative;
}
.row {
    display: flex;
    align-items: center;
    width: max-content;
    height: 26px;
    margin-bottom: 4px;
    background-color: #f1f1f1;
}
.row b {
    width: 31px;
    height: 26px;
    display: flex;
    align-items: center;
    justify-content: center;
    padding-right: 4px;
}
.row span {
    padding: 0 12px 0 10px;
}
.setups span {
    padding: 0 13px 0 5px;
}
.active-setup span {
    margin-left: -5px;
    padding: 3px 10px;
    background-color: #9a9a94;
    color: white;
    font-weight: bold;
}
.active-setup input {
    appearance: none;
    width: 17px;
    height: 17px;
    margin: 0 9px 0 5px;
    border: 1px solid #777;
    border-radius: 50%;
    background: radial-gradient(circle, #222 3px, #ddd 4px);
}
.selected b:last-of-type, .selected span {
    height: 26px;
    line-height: 26px;
    background-color: #0e9ade;
}
.selected span {
    color: white;
    font-weight: bold;
}
/* tree arrows sit beside the row they open */
.open::before, .closed::before {
    content: "";
    position: absolute;
    left: -23px;
    top: 7px;
    width: 9px;
    height: 12px;
    background-color: #333;
}
.open::before {
    height: 9px;
    top: 9px;
    clip-path: polygon(100% 0, 100% 100%, 0 100%);
}
.closed::before {
    left: -22px;
    clip-path: polygon(0 0, 100% 50%, 0 100%, 0 0, 1px 2px, 1px 10px, 7px 6px, 1px 2px);
}
.status {
    position: relative;
    align-self: flex-end;
    display: flex;
    align-items: center;
    gap: 19px;
    margin: 0 16px 10px 0;
    font-weight: bold;
    color: #2c2c2c;
}
.text-commands {
    height: 31px;
    flex: none;
    display: flex;
    align-items: center;
    gap: 13px;
    padding-left: 6px;
    background-color: #f1f1f1;
    border: 1px solid #c4c4c4;
    border-bottom-width: 2px;
    color: #666;
}

/* Taskbar */
.taskbar {
    position: relative;
    z-index: 3;
    height: 60px;
    flex: none;
    display: flex;
    justify-content: space-between;
    background-color: #202224;
    color: white;
    font: 15px/20px "Noto Sans", sans-serif;
}
.weather {
    flex: 1;
    display: flex;
    gap: 4px;
    padding: 7px 0 0 24px;
}
.weather div {
    padding-top: 2px;
}
.weather span {
    color: #c4c4c4;
}
.apps {
    display: flex;
    align-items: center;
    margin-right: 6px;
}
.apps button {
    position: relative;
    width: 55px;
    height: 50px;
}
.apps .start {
    width: 60px;
}
.search {
    width: 275px;
    height: 40px;
    display: flex;
    align-items: center;
    margin-right: 2px;
    padding: 0 19px 0 14px;
    border-radius: 20px;
    border-top: 1px solid #6a6063;
    background-color: #414344;
}
.search input {
    flex: 1;
    min-width: 0;
    border: 0;
    padding: 0 0 0 12px;
    background: none;
    font: 17px "Noto Sans", sans-serif;
}
.search input::placeholder {
    color: #cfcfcf;
}
.running::after {
    content: "";
    position: absolute;
    bottom: 1px;
    width: 8px;
    height: 4px;
    border-radius: 2px;
    background-color: #9a9a9a;
}
.apps .current {
    width: 48px;
    margin-left: 4px;
    border-radius: 5px;
    background-color: #333435;
}
.current::after {
    width: 20px;
}
.apps .current::after {
    background-color: #7cc0ee;
}
.tray {
    flex: 1;
    display: flex;
    align-items: center;
    justify-content: flex-end;
    gap: 26px;
    padding-right: 24px;
}
.lang {
    text-align: center;
}
.net {
    display: flex;
    align-items: center;
    gap: 10px;
    margin-left: -4px;
}
.clock {
    text-align: right;
    margin-left: -6px;
}

/* NC Program window */
.dialog {
    position: absolute;
    left: 385px;
    right: 409px;
    top: 12px;
    bottom: 91px;
    z-index: 2;
    display: flex;
    flex-direction: column;
    border: 1px solid #a8a8a8;
    border-radius: 9px;
    background-color: #f4f4f4;
    box-shadow: 0 8px 36px rgba(0, 0, 0, 0.42);
    overflow: hidden;
    font: 15px/20px "Noto Sans", sans-serif;
    color: #444;
}
.dialog-title {
    height: 37px;
    flex: none;
    display: flex;
    align-items: center;
    gap: 7px;
    padding: 0 15px 2px 9px;
    background-color: #f1f1f1;
    font-size: 14px;
    color: #1c1c1c;
}
.dialog-title button {
    margin-left: auto;
}
.dialog-tabs {
    height: 35px;
    flex: none;
    display: flex;
    padding-left: 14px;
}
.dialog-tabs button {
    height: 35px;
    padding: 0 11px;
    border-top: 3px solid transparent;
}
.dialog-tabs .current {
    position: relative;
    background-color: white;
    border-top-color: #0e9ade;
}
.dialog-tabs .current::after {
    content: "";
    position: absolute;
    right: 0;
    width: 1px;
    height: 17px;
    background-color: #b4b4b4;
}
.help {
    display: flex;
    align-items: center;
    gap: 8px;
    margin: 0 33px 2px auto;
}
.dialog-body {
    flex: 1;
    display: flex;
    margin-right: 15px;
    border: 1px solid #c0c0c0;
    border-left: 0;
}
.settings {
    width: 50%;
    padding: 21px 36px 0 21px;
}
.fields {
    margin: 4px 0 34px;
}
.machine {
    margin-bottom: 33px;
}
.field {
    display: flex;
    align-items: center;
    height: 35px;
}
.machine .field {
    height: 36px;
}
.field label {
    width: 217px;
    flex: none;
}
.machine .field label {
    width: 204px;
}
.field > .select-box, .field > input[type=text], .with-icons, .focused {
    flex: 1;
    min-width: 0;
}
.with-icons {
    display: flex;
    align-items: center;
}
.with-icons .select-box, .with-icons input {
    flex: 1;
    min-width: 0;
}
.with-icons button {
    width: 20px;
    margin-left: 14px;
}
.with-icons button:nth-child(2) {
    margin-left: 9px;
}
input[type=text], select {
    font: inherit;
    color: #333;
}
.field input[type=text] {
    width: 100%;
    height: 30px;
    padding: 0 10px;
    border: 1px solid #cfcfcf;
    background-color: white;
}
.focused {
    position: relative;
    height: 30px;
}
.focused::after {
    content: "";
    position: absolute;
    left: 0;
    right: 0;
    top: 29px;
    height: 6px;
    border-top: 1px solid #0e9ade;
    background-color: #b4e0f2;
}
.caret {
    position: absolute;
    left: 46px;
    top: 5px;
    width: 1px;
    height: 20px;
    background-color: black;
}
.field .derived {
    font-style: italic;
    color: #0e8fd0;
}
.select-box {
    position: relative;
}
.select-box select {
    display: block;
    appearance: none;
    width: 100%;
    height: 34px;
    padding: 0 8px;
    border: 1px solid #cfcfcf;
    border-radius: 0;
    background-color: white;
}
.select-box::after {
    content: "";
    position: absolute;
    right: 9px;
    top: 14px;
    border: 3px solid transparent;
    border-top: 4px solid #777;
    border-bottom: 0;
}
.field input[type=checkbox] {
    appearance: none;
    width: 18px;
    height: 18px;
    margin: 0 1px;
    border: 1px solid #b9b9b9;
    background-color: #f6f6f6;
}
.field input[type=checkbox]:checked {
    display: flex;
    align-items: center;
    justify-content: center;
    background-color: #c6c6c6;
}
.field input[type=checkbox]:checked::after {
    content: "";
    width: 6px;
    height: 11px;
    border: solid white;
    border-width: 0 2px 2px 0;
    transform: translateY(-1px) rotate(42deg);
}
.properties {
    width: 50%;
    padding: 21px 14px 0 20px;
    background-color: white;
}
.properties-head {
    display: flex;
    justify-content: space-between;
    padding: 0 28px 0 7px;
    margin-bottom: 7px;
}
.properties-head button {
    padding-bottom: 4px;
}
.properties-head svg {
    fill: #777;
}
.section {
    width: 100%;
    height: 40px;
    margin-bottom: 5px;
    padding-left: 16px;
    justify-content: flex-start;
    background-color: #ececec;
}
.section::before {
    content: "";
    margin-right: 21px;
    border: 6px solid transparent;
    border-left: 8px solid #777;
    border-right: 0;
}
.dialog-footer {
    height: 63px;
    flex: none;
    display: flex;
    align-items: center;
    justify-content: flex-end;
    gap: 22px;
    padding: 0 15px 1px 0;
}
.dialog-footer button {
    height: 33px;
    padding: 0 15px;
    border: 1px solid #b5b5b5;
    border-radius: 2px;
}
.dialog-footer .primary {
    background-color: #e0e0e0;
}
```
